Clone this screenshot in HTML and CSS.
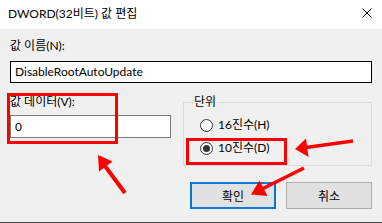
FILE: index.html
```html
<!DOCTYPE html>
<html lang="ko">
<head>
    <meta charset="UTF-8">
    <title>DWORD(32비트) 값 편집</title>
    <link rel="stylesheet" href="styles.css">
</head>
<body>

    <div class="dialog">
        <div class="title-bar">
            <span class="title">DWORD(32비트) 값 편집</span>
            <span class="close">
                <svg width="10" height="10" viewBox="0 0 10 10">
                    <path d="M0.5 0.5 L9.5 9.5 M9.5 0.5 L0.5 9.5" stroke="#000" stroke-width="1" fill="none"/>
                </svg>
            </span>
        </div>

        <div class="content">
            <label class="field-label">값 이름(N):</label>
            <div class="textbox name-box">DisableRootAutoUpdate</div>

            <div class="lower">
                <div class="data-col">
                    <label class="field-label">값 데이터(V):</label>
                    <div class="textbox data-box">0</div>
                </div>

                <fieldset class="base-group">
                    <legend>단위</legend>
                    <div class="radio-row">
                        <span class="radio"></span>
                        <span>16진수(H)</span>
                    </div>
                    <div class="radio-row">
                        <span class="radio checked"></span>
                        <span>10진수(D)</span>
                    </div>
                </fieldset>
            </div>

            <div class="buttons">
                <button class="btn btn-default">확인</button>
                <button class="btn">취소</button>
            </div>
        </div>
    </div>

    <!-- annotation marks drawn over the dialog -->
    <div class="mark mark-data"></div>
    <div class="mark mark-radio"></div>
    <svg class="arrows" width="382" height="223" viewBox="0 0 382 223">
        <line x1="125" y1="193" x2="105" y2="166" stroke="#f00" stroke-width="4"/>
        <polygon points="98,155 112.5,161.5 99,171.5" fill="#f00"/>

        <line x1="353" y1="141" x2="306" y2="147.5" stroke="#f00" stroke-width="3.5"/>
        <polygon points="295,149 306,138.5 308.5,157" fill="#f00"/>

        <line x1="304" y1="168" x2="263" y2="188.5" stroke="#f00" stroke-width="3.5"/>
        <polygon points="251,194.5 259.5,180.5 267.5,196" fill="#f00"/>
    </svg>

</body>
</html>
```

FILE: styles.css
```css
body {
    margin: 0;
    width: 382px;
    height: 223px;
    overflow: hidden;
    font-family: "Segoe UI", Lato, "Noto Sans CJK KR", sans-serif;
    font-size: 12px;
    color: #000;
    background: #f0f0f0;
    position: relative;
}
.dialog {
    height: 222px;
    border-bottom: 1px solid #505050;
    background: #f0f0f0;
}
.title-bar {
    height: 29px;
    background: #fff;
    display: flex;
    align-items: center;
    justify-content: space-between;
    padding: 0 10px 0 8px;
}
.title {
    line-height: 16px;
    margin-top: -2px;
}
.close {
    display: flex;
    margin-top: -3px;
}
.content {
    padding: 9px 10px 0 10px;
}
.field-label {
    display: block;
    line-height: 16px;
    height: 16px;
}
.textbox {
    box-sizing: border-box;
    background: #fff;
    line-height: 16px;
    padding: 2px 4px;
}
.name-box {
    margin-top: 7px;
    height: 22px;
    border: 1px solid #000;
}
.lower {
    display: grid;
    grid-template-columns: 161px 1fr;
    column-gap: 12px;
    margin-top: 11px;
    align-items: start;
}
.data-box {
    margin-top: 5px;
    height: 23px;
    border: 1px solid #7a7a7a;
    padding: 3px 4px;
}
/* group box */
.base-group {
    margin: 0;
    padding: 0 0 8px 16px;
    border: 1px solid #dcdcdc;
    height: 72px;
    box-sizing: border-box;
    min-width: 0;
}
.base-group legend {
    margin-left: -7px;
    padding: 0 1px;
    line-height: 16px;
}
.radio-row {
    display: flex;
    align-items: center;
    gap: 5px;
    height: 16px;
    line-height: 16px;
    margin-top: 7px;
}
.radio {
    box-sizing: border-box;
    width: 13px;
    height: 13px;
    border: 1px solid #333;
    border-radius: 50%;
    background: #fff;
    display: flex;
    align-items: center;
    justify-content: center;
}
.radio.checked::after {
    content: "";
    width: 7px;
    height: 7px;
    border-radius: 50%;
    background: #333;
}
.buttons {
    display: flex;
    justify-content: flex-end;
    gap: 10px;
    margin-top: 16px;
}
.btn {
    box-sizing: border-box;
    width: 86px;
    height: 27px;
    background: #e1e1e1;
    border: 1px solid #adadad;
    font-family: inherit;
    font-size: 12px;
    color: #000;
    padding: 0;
}
.btn-default {
    border: 2px solid #0078d7;
}
/* red annotation marks */
.mark {
    position: absolute;
    box-sizing: border-box;
    border: 3px solid #f00;
}
.mark-data {
    left: 7px;
    top: 93px;
    width: 111px;
    height: 51px;
}
.mark-radio {
    left: 186px;
    top: 138px;
    width: 101px;
    height: 27px;
}
.arrows {
    position: absolute;
    left: 0;
    top: 0;
}
```
